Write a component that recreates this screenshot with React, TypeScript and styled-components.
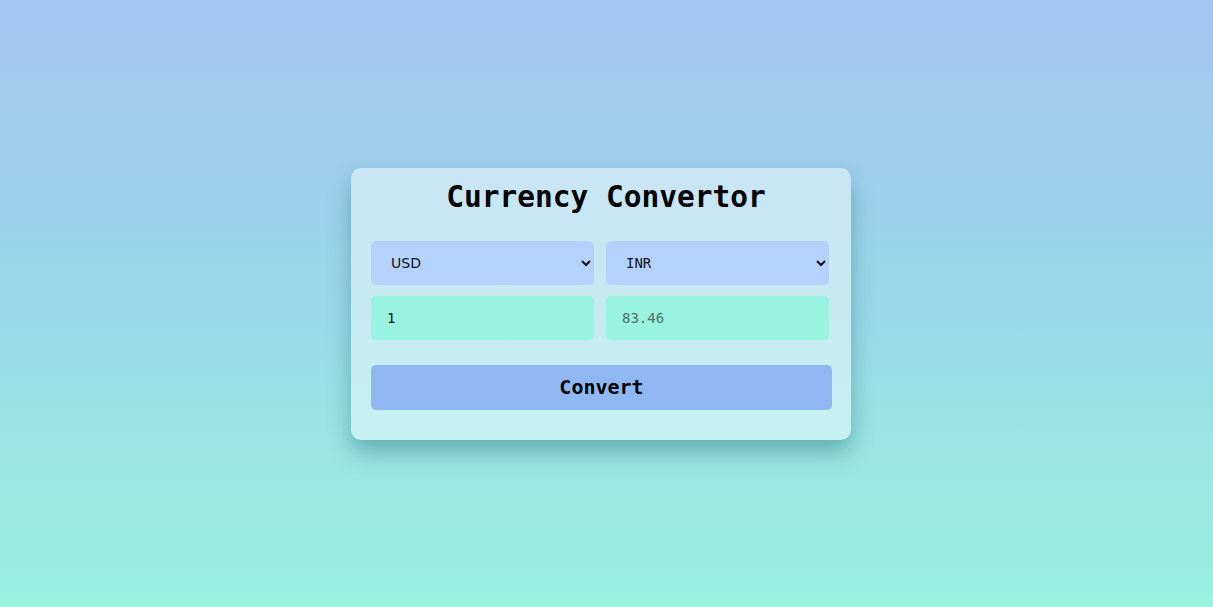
import React from "react";
import styled, { createGlobalStyle } from "styled-components";

const GlobalStyle = createGlobalStyle`
  html, body { margin: 0; padding: 0; }
  body {
    min-height: 100vh;
    background: linear-gradient(180deg, #a2c5f2 0%, #9ad8e8 50%, #98f3e0 100%);
    font-family: "DejaVu Sans Mono", monospace;
  }
`;

const Page = styled.div`
  width: 100%;
  height: 607px;
  display: flex;
  align-items: center;
  justify-content: center;
  padding-right: 11px;
  box-sizing: border-box;
`;

const Card = styled.div`
  width: 500px;
  box-sizing: border-box;
  padding: 10px 19px 30px 20px;
  border-radius: 10px;
  background: rgba(255, 255, 255, 0.45);
  box-shadow: 0 12px 22px rgba(40, 110, 120, 0.45);
  display: flex;
  flex-direction: column;
`;

const Title = styled.h1`
  margin: 0 0 23px;
  padding-left: 9px;
  height: 40px;
  line-height: 39px;
  text-align: center;
  font-family: "DejaVu Sans Mono", monospace;
  font-weight: bold;
  font-size: 29.5px;
  color: #000;
`;

const Grid = styled.div`
  display: grid;
  grid-template-columns: 223px 223px;
  column-gap: 12px;
  row-gap: 11px;
  margin-bottom: 25px;
`;

const Select = styled.select<{ $sans?: boolean }>`
  height: 44px;
  border: none;
  border-radius: 5px;
  background: #b4d2fb;
  padding: 0 16px;
  font-family: ${(p) => (p.$sans ? '"DejaVu Sans", sans-serif' : '"DejaVu Sans Mono", monospace')};
  font-size: 14px;
  color: #111;
  outline: none;
`;

const Field = styled.input<{ $muted?: boolean }>`
  height: 44px;
  box-sizing: border-box;
  border: none;
  border-radius: 5px;
  background: #98f3e0;
  padding: 1px 16px 0;
  font-family: "DejaVu Sans Mono", monospace;
  font-size: 14px;
  color: ${(p) => (p.$muted ? "#4f6f68" : "#111")};
  outline: none;
`;

const Button = styled.button`
  width: 461px;
  height: 45px;
  border: none;
  border-radius: 5px;
  background: #8fb8f2;
  font-family: "DejaVu Sans Mono", monospace;
  font-weight: bold;
  font-size: 20px;
  color: #000;
  cursor: pointer;
`;

export default function App() {
  return (
    <>
      <GlobalStyle />
      <Page>
        <Card>
          <Title>Currency Convertor</Title>
          <Grid>
            <Select $sans defaultValue="USD">
              <option value="USD">USD</option>
              <option value="INR">INR</option>
              <option value="EUR">EUR</option>
            </Select>
            <Select defaultValue="INR">
              <option value="USD">USD</option>
              <option value="INR">INR</option>
              <option value="EUR">EUR</option>
            </Select>
            <Field type="text" defaultValue="1" />
            <Field type="text" $muted defaultValue="83.46" readOnly />
          </Grid>
          <Button>Convert</Button>
        </Card>
      </Page>
    </>
  );
}
